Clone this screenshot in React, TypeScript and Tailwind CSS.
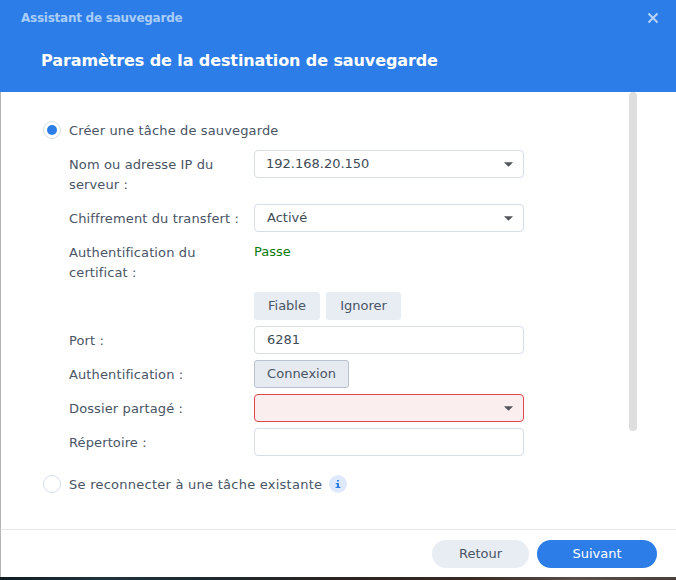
import React from "react";

const font = { fontFamily: '"DejaVu Sans", sans-serif' };

function Caret() {
  return (
    <svg width="9" height="5" viewBox="0 0 9 5" className="shrink-0">
      <path d="M0 0.3H9L7.6 1.8L4.5 4.8L1.4 1.8Z" fill="#53565c" />
    </svg>
  );
}

function Field({ children, error }: { children?: React.ReactNode; error?: boolean }) {
  return (
    <div
      className={
        "flex h-[28px] w-[270px] items-center justify-between rounded-[4px] border pl-[12px] pr-[10px] text-[13px] text-[#414b55] " +
        (error ? "border-[#e04848] bg-[#faeeee]" : "border-[#d6dee6] bg-white")
      }
    >
      {children}
    </div>
  );
}

function Row({ label, children }: { label: string; children: React.ReactNode }) {
  return (
    <div className="flex">
      <div className="w-[185px] shrink-0 pt-[5px] pb-[3px] pr-[8px] text-[13px] leading-[20px] tracking-[0.12px] text-[#495465]">
        {label}
      </div>
      <div>{children}</div>
    </div>
  );
}

function Btn({ children, w, active }: { children: React.ReactNode; w: string; active?: boolean }) {
  return (
    <div
      className={
        "flex h-[28px] items-center justify-center rounded-[3px] text-[13px] text-[#495465] " +
        w +
        (active ? " border border-[#b9c2cc] bg-[#e6ebf2]" : " bg-[#e8edf4]")
      }
    >
      {children}
    </div>
  );
}

export default function App() {
  return (
    <div className="flex h-[580px] w-[676px] flex-col overflow-hidden bg-white" style={font}>
      <header className="h-[92px] shrink-0 bg-[#2d7de9] pl-[21px] pr-[17px]">
        <div className="flex h-[35px] items-center justify-between">
          <span className="text-[12px] font-bold tracking-[-0.25px] text-[#a8cdf8]">Assistant de sauvegarde</span>
          <svg width="12" height="12" viewBox="0 0 12 12">
            <path d="M1.5 1.5L10.5 10.5M10.5 1.5L1.5 10.5" stroke="#b4d3f9" strokeWidth="2" />
          </svg>
        </div>
        <h1 className="mt-[10px] pl-[20px] text-[16px] leading-[32px] font-bold tracking-[-0.1px] text-white">
          Paramètres de la destination de sauvegarde
        </h1>
      </header>

      <main className="flex min-h-0 flex-1 border-l border-[#b4b4b4]">
        <div className="w-[628px] shrink-0 pt-[28px] pl-[42px]">
          <div className="flex h-[20px] items-center gap-[8px] text-[13px] tracking-[0.14px] text-[#495465]">
            <span className="flex h-[18px] w-[18px] items-center justify-center rounded-full border border-[#d6dee6]">
              <span className="h-[10px] w-[10px] rounded-full bg-[#2d7de9]" />
            </span>
            <span className="pt-[1px]">Créer une tâche de sauvegarde</span>
          </div>
          <div className="mt-[10px] flex flex-col gap-[6px] pl-[26px]">
            <Row label="Nom ou adresse IP du serveur :">
              <Field>
                <span className="-ml-[1px]">192.168.20.150</span>
                <Caret />
              </Field>
            </Row>
            <Row label="Chiffrement du transfert :">
              <Field>
                Activé
                <Caret />
              </Field>
            </Row>
            <Row label="Authentification du certificat :">
              <div className="pt-[4px] text-[13px] leading-[20px] text-[#0b7b0b]">Passe</div>
            </Row>
            <div className="flex gap-[6px] pl-[185px]">
              <Btn w="w-[66px]">Fiable</Btn>
              <Btn w="w-[75px]">Ignorer</Btn>
            </div>
            <Row label="Port :">
              <Field>6281</Field>
            </Row>
            <Row label="Authentification :">
              <Btn w="w-[95px]" active>
                Connexion
              </Btn>
            </Row>
            <Row label="Dossier partagé :">
              <Field error>
                <span />
                <Caret />
              </Field>
            </Row>
            <Row label="Répertoire :">
              <Field />
            </Row>
          </div>
          <div className="mt-[18px] flex h-[20px] items-center text-[13px] tracking-[0.25px] text-[#495465]">
            <span className="mr-[8px] h-[18px] w-[18px] rounded-full border border-[#d6dee6]" />
            <span className="pt-[1px]">Se reconnecter à une tâche existante</span>
            <span className="ml-[7px] flex h-[18px] w-[18px] items-center justify-center rounded-full bg-[#deeafb]">
              <svg width="6" height="8" viewBox="0 0 6 8">
                <path d="M2 0H4V1.5H2ZM0.8 3H4V6.8H5.4V8H0.6V6.8H2V4.2H0.8Z" fill="#2d7de9" />
              </svg>
            </span>
          </div>
        </div>
        <div className="h-[339px] w-[8px] shrink-0 rounded-full bg-[#dedede]" />
      </main>

      <footer className="flex h-[48px] shrink-0 items-center justify-end gap-[8px] border-t border-l border-t-[#e3e6ea] border-l-[#b4b4b4] pr-[19px]">
        <div className="flex h-[28px] w-[97px] items-center justify-center rounded-full bg-[#e8edf4] text-[13px] text-[#495465]">
          Retour
        </div>
        <div className="flex h-[28px] w-[120px] items-center justify-center rounded-full bg-[#2d7de9] text-[13px] text-white">
          Suivant
        </div>
      </footer>
      <div className="h-[3px] shrink-0 bg-[linear-gradient(90deg,#0f1c22,#1d343f_15%,#1c2a30_30%,#2b2320_50%,#3a2a22_70%,#5a4e46_85%,#4a3f3a)]" />
    </div>
  );
}
